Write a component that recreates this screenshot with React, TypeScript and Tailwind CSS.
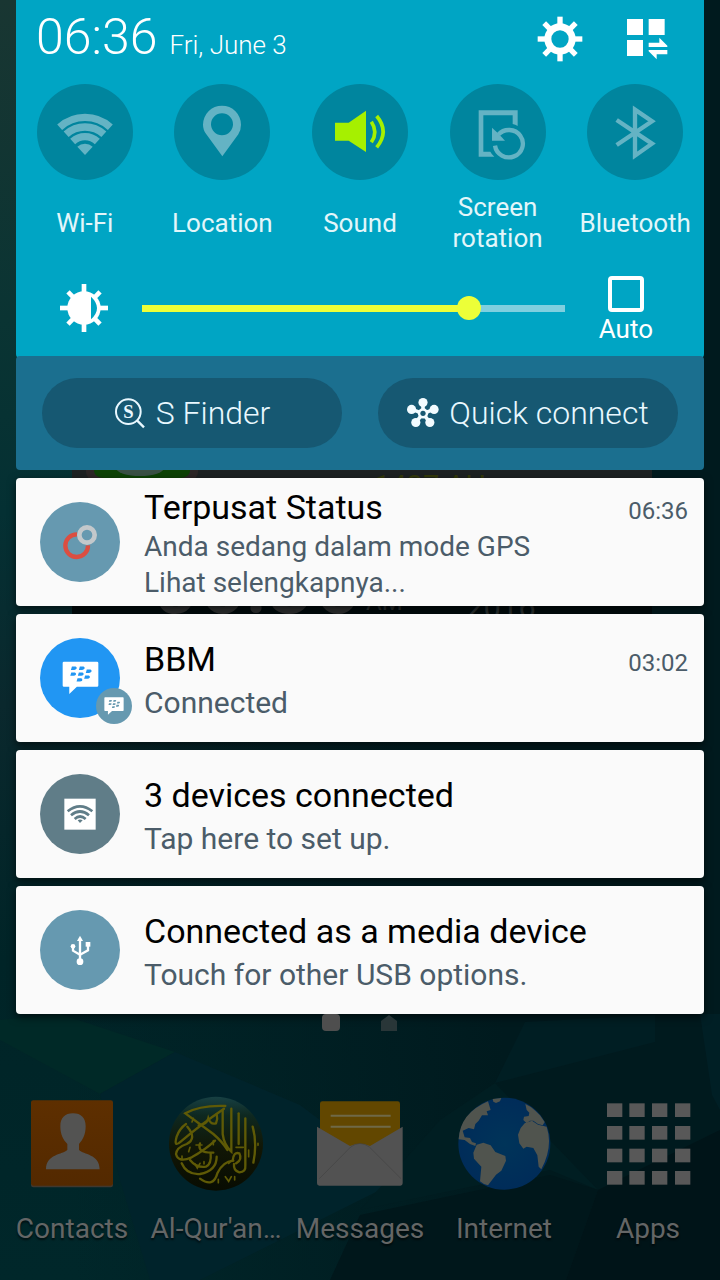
import { useState } from "react";
import type { CSSProperties, ReactNode } from "react";

const DIM = "#64b3c4";

function ToggleIcon({ box, children }: { box: string; children: ReactNode }) {
  return (
    <svg viewBox={box} className="size-24" fill="none" aria-hidden="true">
      {children}
    </svg>
  );
}

const toggles = [
  {
    label: "Wi-Fi",
    on: false,
    icon: (
      <ToggleIcon box="109 253 288 288">
        <g stroke={DIM} strokeWidth="22">
          <path d="M177 382.6A113 113 0 0 1 329 382.6" />
          <path d="M196.4 404A84 84 0 0 1 309.6 404" />
          <path d="M216 425.4A55 55 0 0 1 290 425.4" />
        </g>
        <path d="M253 466L230 441A34 34 0 0 1 276 441Z" fill={DIM} />
      </ToggleIcon>
    ),
  },
  {
    label: "Location",
    on: false,
    icon: (
      <ToggleIcon box="522 253 288 288">
        <path
          fill={DIM}
          fillRule="evenodd"
          d="M667 470L619 404Q609 391 609 375A57 57 0 0 1 723 375Q723 391 715 404ZM666 341A33 33 0 1 0 666 407A33 33 0 1 0 666 341Z"
        />
      </ToggleIcon>
    ),
  },
  {
    label: "Sound",
    on: true,
    icon: (
      <ToggleIcon box="933 253 288 288">
        <path d="M1002 369H1043L1095 333V457L1043 423H1002Z" fill="#a6f000" />
        <g stroke="#a6f000" strokeWidth="11">
          <path d="M1111 366Q1132 397 1111 428" />
          <path d="M1127 349Q1166 396 1127 443" />
        </g>
      </ToggleIcon>
    ),
  },
  {
    label: "Screen rotation",
    on: false,
    icon: (
      <ToggleIcon box="264 253 288 288">
        <path
          fill={DIM}
          d="M350 332H467V379Q460 375 452 373V347H364V456H385Q389 464 397 471H350Z"
        />
        <path d="M409 405A42 41 0 1 1 399 438" stroke={DIM} strokeWidth="13" />
        <path d="M390 384L404 397L418 411L429 423H390Z" fill={DIM} />
      </ToggleIcon>
    ),
  },
  {
    label: "Bluetooth",
    on: false,
    icon: (
      <ToggleIcon box="677 253 288 288">
        <path
          d="M766 361L872 432L821 468V330L872 365L766 436"
          stroke={DIM}
          strokeWidth="13"
        />
      </ToggleIcon>
    ),
  },
];

const EIGHTHS = [0, 45, 90, 135, 180, 225, 270, 315];

function GearIcon() {
  return (
    <svg viewBox="-72 -72 144 144" className="size-12" aria-hidden="true">
      <circle r="36.5" fill="none" stroke="#fff" strokeWidth="21" />
      {EIGHTHS.map((a) => (
        <rect key={a} x="-8" y="-67" width="16" height="24" fill="#fff" transform={`rotate(${a})`} />
      ))}
    </svg>
  );
}

function EditPanelIcon() {
  return (
    <svg viewBox="792 45 144 144" className="size-12" fill="#fff" aria-hidden="true">
      <path d="M801 57H849V105H801ZM866 57H914V105H866ZM801 120H849V168H801Z" />
      <path d="M922 141H866V128H898V113L922 137ZM866 150H922V163H890V178L866 154Z" />
    </svg>
  );
}

function BrightnessIcon() {
  return (
    <svg viewBox="-72 -72 144 144" className="size-12 shrink-0" aria-hidden="true">
      <circle r="50" fill="#fff" />
      {EIGHTHS.map((a) => (
        <rect
          key={a}
          x="-7"
          y={a % 90 ? -68 : -72}
          width="14"
          height="26"
          fill="#fff"
          transform={`rotate(${a})`}
        />
      ))}
      <path d="M21 -34Q57 0 21 34Z" fill="#00a5c4" />
    </svg>
  );
}

function FinderIcon() {
  return (
    <svg viewBox="340 410 96 96" className="size-8" fill="none" stroke="#e9f8ff" aria-hidden="true">
      <circle cx="383" cy="454" r="37" strokeWidth="6" />
      <path d="M409 480L430 501" strokeWidth="7" />
      <text
        x="383"
        y="473"
        textAnchor="middle"
        fontSize="56"
        fontWeight="700"
        fontFamily="'Liberation Serif', serif"
        fill="#e9f8ff"
        stroke="none"
      >
        S
      </text>
    </svg>
  );
}

function QuickConnectIcon() {
  const nodes = [
    [190, 428],
    [155, 449],
    [224, 449],
    [168, 489],
    [211, 489],
  ];
  return (
    <svg viewBox="141 411 98 98" className="size-8" aria-hidden="true">
      {nodes.map(([x, y]) => (
        <g key={`${x}-${y}`}>
          <path d={`M190 461L${x} ${y}`} stroke="#f2fbff" strokeWidth="11" />
          <circle cx={x} cy={y} r="14" fill="#f2fbff" />
        </g>
      ))}
      <circle cx="190" cy="461" r="16" fill="#f2fbff" />
      <circle cx="190" cy="461" r="8" fill="#165872" />
    </svg>
  );
}

function BubbleIcon({ dot, className }: { dot: string; className: string }) {
  const dots = [
    [221, 594],
    [245, 594],
    [266, 603],
    [219, 612],
    [242, 612],
    [261, 621],
    [238, 629],
  ];
  return (
    <svg viewBox="185 572 112 102" className={className} aria-hidden="true">
      <path
        d="M191 574H291Q295 574 295 578V646Q295 650 291 650H230L207 672V650H191Q187 650 187 646V578Q187 574 191 574Z"
        fill="#fff"
      />
      {dots.map(([x, y]) => (
        <path
          key={`${x}-${y}`}
          transform={`translate(${x} ${y})`}
          d="M-6 -5H5Q10 -4 8 1Q6 5 1 5H-9Z"
          fill={dot}
        />
      ))}
    </svg>
  );
}

type Notice = {
  title: string;
  lines: string[];
  time?: string;
  tint: string;
  icon: ReactNode;
};

const notices: Notice[] = [
  {
    title: "Terpusat Status",
    lines: ["Anda sedang dalam mode GPS", "Lihat selengkapnya..."],
    time: "06:36",
    tint: "bg-[#6699b0]",
    icon: (
      <svg viewBox="120 96 240 240" className="size-20" fill="none" aria-hidden="true">
        <path d="M231 193A34 34 0 1 0 264 226" stroke="#dc4e41" strokeWidth="13" />
        <circle cx="261" cy="195" r="23" stroke="#c3c8cb" strokeWidth="14" />
      </svg>
    ),
  },
  {
    title: "BBM",
    lines: ["Connected"],
    time: "03:02",
    tint: "bg-[#2196f3]",
    icon: (
      <>
        <BubbleIcon dot="#2196f3" className="w-[37px]" />
        <span className="absolute -right-3 -bottom-1.5 flex size-9 items-center justify-center rounded-full bg-[#6699b0]">
          <BubbleIcon dot="#6699b0" className="w-5" />
        </span>
      </>
    ),
  },
  {
    title: "3 devices connected",
    lines: ["Tap here to set up."],
    tint: "bg-[#607d88]",
    icon: (
      <svg viewBox="120 72 240 240" className="size-20" fill="none" aria-hidden="true">
        <path d="M193 146H287V239H193Z" fill="#fff" />
        <g stroke="#607d88" strokeWidth="8">
          <path d="M203 184Q240 154 277 184" />
          <path d="M213 196Q240 173 267 196" />
          <path d="M224 207Q240 192 257 207" />
        </g>
        <path d="M233 211Q240 206 248 211L240 219Z" fill="#607d88" />
      </svg>
    ),
  },
  {
    title: "Connected as a media device",
    lines: ["Touch for other USB options."],
    tint: "bg-[#6699b0]",
    icon: (
      <svg viewBox="120 480 240 240" className="size-20" fill="none" aria-hidden="true">
        <g stroke="#fff" strokeWidth="7">
          <path d="M240 568V635" />
          <path d="M219 589V602L240 614" />
          <path d="M264 586V601L240 614" />
        </g>
        <g fill="#fff">
          <path d="M231 573L240 557L249 573Z" />
          <circle cx="219" cy="589" r="7" />
          <path d="M257 576H271V590H257Z" />
          <circle cx="240" cy="635" r="10" />
        </g>
      </svg>
    ),
  },
];

const dock = [
  {
    label: "Contacts",
    icon: (
      <svg viewBox="72 258 288 288" className="size-24" aria-hidden="true">
        <defs>
          <linearGradient id="contact" x2="0" y2="1">
            <stop stopColor="#5e2f00" />
            <stop offset="1" stopColor="#532900" />
          </linearGradient>
        </defs>
        <rect x="93" y="274" width="246" height="258" rx="7" fill="#40382f" />
        <rect x="93" y="271" width="246" height="256" rx="7" fill="url(#contact)" />
        <path
          d="M219 310C244 310 257 324 257 349C257 375 248 390 237 402V420C250 434 299 432 299 478H138C138 432 188 434 202 420V402C190 390 181 375 181 349C181 324 194 310 219 310Z"
          fill="#535352"
        />
      </svg>
    ),
  },
  {
    label: "Al-Qur'an…",
    icon: (
      <svg viewBox="504 258 288 288" className="size-24" fill="none" aria-hidden="true">
        <defs>
          <linearGradient id="quran" x2="0" y2="1">
            <stop stopColor="#174043" />
            <stop offset="0.2" stopColor="#0e2820" />
            <stop offset="0.55" stopColor="#111605" />
            <stop offset="1" stopColor="#080c02" />
          </linearGradient>
        </defs>
        <circle cx="648" cy="401" r="141" fill="url(#quran)" />
        <g stroke="#5f5a06" strokeWidth="7" strokeLinecap="round">
          <path d="M676 288Q600 285 556 310Q590 335 640 372Q668 396 682 420" />
          <path d="M672 296Q600 345 543 394Q520 415 530 380Q538 356 558 342" />
          <path d="M562 350Q592 385 560 402Q530 412 528 432Q535 460 575 442Q615 420 645 392" />
          <path d="M668 300V372Q672 405 694 425V296" />
          <path d="M716 310V402" />
          <path d="M736 325V466Q738 487 718 487Q700 482 702 462" />
          <path d="M758 350Q772 400 760 458" />
          <path d="M545 460Q560 495 600 492Q650 482 650 440" />
          <path d="M570 450Q590 475 618 470Q635 462 632 430" />
          <path d="M600 506Q640 535 652 490Q668 455 700 452" />
          <path d="M698 452Q700 424 718 430Q728 450 708 460" />
          <path d="M596 346Q620 345 625 325Q632 345 648 340Q654 326 650 312" />
          <path d="M600 400Q590 430 640 428" />
        </g>
        <g stroke="#5f5a06" strokeWidth="5" strokeLinecap="round">
          <path d="M585 462L592 474L600 460M676 500L686 514L694 500M655 508V518M704 500V510M612 455V462M588 405H606M708 412H730M570 412L566 425M686 460L694 452M580 325L576 336M774 400V406M546 438V448M746 420V440M640 392V404" />
        </g>
      </svg>
    ),
  },
  {
    label: "Messages",
    icon: (
      <svg viewBox="936 258 288 288" className="size-24" fill="none" aria-hidden="true">
        <rect x="960" y="274" width="240" height="180" rx="7" fill="#624700" />
        <path d="M992 317H1172M992 350H1172" stroke="#6f6947" strokeWidth="6" />
        <path
          d="M951 350L1050 408Q1080 394 1110 408L1208 350V520Q1208 527 1201 527H958Q951 527 951 520Z"
          fill="#525252"
        />
        <path d="M958 506L1052 411Q1080 390 1108 411L1203 506" stroke="#434343" strokeWidth="2" />
      </svg>
    ),
  },
  {
    label: "Internet",
    icon: (
      <svg viewBox="288 288 288 288" className="size-24" aria-hidden="true">
        <defs>
          <radialGradient id="sea">
            <stop stopColor="#003459" />
            <stop offset="1" stopColor="#002c59" />
          </radialGradient>
        </defs>
        <circle cx="433" cy="431" r="138" fill="url(#sea)" />
        <g fill="#50544e">
          <path d="M384 304L392 330L380 334L384 346L366 346L356 362L346 372L342 388L326 384L308 392L314 412L330 414L336 426L348 430L346 438L330 432L314 420L296 418Q300 340 384 304Z" />
          <path d="M398 297L424 294L420 304L408 309L400 305Z" />
          <path d="M350 434L370 428L392 436L406 456L436 468L438 482L424 512L408 524L384 556Q368 552 360 544L364 500L342 476L340 458Z" />
          <path d="M496 312Q514 320 526 332L540 346L554 366L548 376L534 372L520 362L510 362L500 370L490 360L492 350L506 348L508 338L500 330Z" />
          <path d="M494 370L516 362L534 374L560 380Q580 440 544 508L536 500L532 466L520 444L500 440L490 446L478 430L474 404L482 384Z" />
        </g>
      </svg>
    ),
  },
  {
    label: "Apps",
    icon: (
      <svg viewBox="720 288 288 288" className="size-24" fill="#585858" aria-hidden="true">
        {[310, 378, 446, 513].map((y) =>
          [741, 808, 876, 945].map((x) => (
            <rect key={`${x}-${y}`} x={x} y={y} width="46" height="41" />
          )),
        )}
      </svg>
    ),
  },
];

function Wallpaper() {
  return (
    <svg
      viewBox="0 0 720 1280"
      preserveAspectRatio="none"
      className="absolute inset-0 size-full"
      aria-hidden="true"
    >
      <defs>
        <linearGradient id="left" x2="0" y2="1">
          <stop stopColor="#193632" />
          <stop offset="0.25" stopColor="#0a3433" />
          <stop offset="0.4" stopColor="#043033" />
          <stop offset="0.55" stopColor="#0a282d" />
          <stop offset="0.75" stopColor="#002427" />
          <stop offset="1" stopColor="#00272a" />
        </linearGradient>
        <linearGradient id="right">
          <stop offset="0.1" stopColor="#001b20" stopOpacity="0" />
          <stop offset="0.7" stopColor="#001a1e" />
        </linearGradient>
      </defs>
      <rect width="720" height="1280" fill="url(#left)" />
      <rect width="720" height="1280" fill="url(#right)" />
      <path d="M0 1020L60 1014L175 1052L100 1094L0 1040Z" fill="#002927" />
      <path d="M175 1052L300 1105L400 1180L200 1280H150L120 1180L100 1094Z" fill="#00232b" />
      <path d="M525 1022L655 1015V1042L495 1083Z" fill="#001e23" />
      <path d="M700 1014H720V1110L712 1095Z" fill="#001f25" />
      <path d="M495 1083L598 1190L550 1170L360 1210L440 1120Z" fill="#001e22" />
      <path d="M598 1190L720 1130V1280H566Z" fill="#001418" />
      <path d="M330 1280L360 1215L550 1175L598 1190L566 1280Z" fill="#00171b" />
    </svg>
  );
}

export default function App() {
  const [level, setLevel] = useState(79);
  const [auto, setAuto] = useState(false);
  const fill = { "--fill": `${level}%` } as CSSProperties;

  return (
    <div className="relative min-h-screen overflow-hidden bg-[#001c21] font-['Roboto',sans-serif]">
      <Wallpaper />

      {/* Home screen clock widget, mostly covered by the shade */}
      <div className="absolute top-[440px] right-[68px] left-[72px] h-[200px] bg-linear-to-b from-[#1d2122] from-20% to-[#020c0e] to-80%">
        <svg viewBox="0 0 120 40" className="absolute top-0 left-3 w-[120px]" aria-hidden="true">
          <rect x="2" width="112" height="40" rx="8" fill="#2c2626" />
          <path d="M10 20H106V30Q106 38 94 38H22Q10 38 10 30Z" fill="#0d4205" />
          <ellipse cx="56" cy="28" rx="24" ry="8" fill="#3a5045" />
        </svg>
        <p className="absolute top-[28px] left-[302px] text-[29px] leading-9 text-[#33390a]">1437 AH</p>
        <p className="absolute top-[95px] left-[80px] text-[82px] leading-[100px] font-medium text-[#303232]">06:36</p>
        <p className="absolute top-[146px] left-[294px] text-[24px] leading-8 text-[#2a3030]">AM</p>
        <p className="absolute top-[150px] left-[394px] text-[31px] leading-9 text-[#2c3232]">2016</p>
      </div>

      <div className="relative flex min-h-screen flex-col">
        <main className="flex flex-col gap-2 px-4">
          <div>
            <section className="rounded-b-[4px] bg-[#00a5c4] pb-3 text-white">
              <header className="flex h-[84px] items-start justify-between pr-8 pl-5">
                <div className="flex items-baseline gap-3">
                  <h1 className="text-[50px] leading-[74px] font-light">06:36</h1>
                  <p className="text-[26px] leading-8 font-light">Fri, June 3</p>
                </div>
                <div className="flex gap-10 pt-[15px]">
                  <button type="button" aria-label="Settings">
                    <GearIcon />
                  </button>
                  <button type="button" aria-label="Edit quick settings">
                    <EditPanelIcon />
                  </button>
                </div>
              </header>

              <div className="grid grid-cols-5">
                {toggles.map((t) => (
                  <button
                    key={t.label}
                    type="button"
                    aria-pressed={t.on}
                    className="flex flex-col items-center gap-3"
                  >
                    <span className="rounded-full bg-[#00859e]">{t.icon}</span>
                    <span className="flex h-[62px] items-center px-4 text-center text-[26px] leading-[31px] text-[#e3f6fa]">
                      {t.label}
                    </span>
                  </button>
                ))}
              </div>

              <div className="mt-[22px] flex items-start gap-[34px] pr-[51px] pl-11">
                <span className="pt-2">
                  <BrightnessIcon />
                </span>
                <span className="flex h-16 min-w-0 flex-1 items-center">
                  <input
                    type="range"
                    min={0}
                    max={100}
                    value={level}
                    onChange={(e) => setLevel(Number(e.target.value))}
                    aria-label="Brightness"
                    style={fill}
                    className="h-[7px] w-full appearance-none bg-[linear-gradient(to_right,#ecff38_var(--fill),#80cfdf_var(--fill))] [&::-webkit-slider-thumb]:size-6 [&::-webkit-slider-thumb]:appearance-none [&::-webkit-slider-thumb]:rounded-full [&::-webkit-slider-thumb]:bg-[#ecff38]"
                  />
                </span>
                <label className="flex flex-col items-center text-[26px] leading-[34px]">
                  <input
                    type="checkbox"
                    checked={auto}
                    onChange={(e) => setAuto(e.target.checked)}
                    className="size-9 appearance-none rounded-[4px] border-4 border-white checked:bg-white"
                  />
                  Auto
                </label>
              </div>
            </section>

            <section className="-mt-0.5 flex gap-9 rounded-[4px] bg-[#1b6f8f] px-[26px] py-[22px] text-[32px] font-light text-[#e9f8ff]">
              <button
                type="button"
                className="flex h-[70px] flex-1 items-center justify-center gap-2.5 rounded-full bg-[#165872]"
              >
                <FinderIcon />
                S Finder
              </button>
              <button
                type="button"
                className="flex h-[70px] flex-1 items-center justify-center gap-2.5 rounded-full bg-[#165872]"
              >
                <QuickConnectIcon />
                Quick connect
              </button>
            </section>
          </div>

          {notices.map((n) => (
            <article
              key={n.title}
              className="flex h-32 items-center gap-6 rounded-[4px] bg-[#fafafa] pr-4 pl-6 shadow-[0_3px_8px_rgba(0,0,0,0.6)]"
            >
              <div className={`relative flex size-20 shrink-0 items-center justify-center rounded-full ${n.tint}`}>
                {n.icon}
              </div>
              <div className={`flex min-w-0 flex-1 flex-col pt-1 ${n.lines.length > 1 ? "gap-0.5" : "gap-1.5"}`}>
                <div className="flex items-baseline justify-between">
                  <h2 className="text-[34px] leading-10 text-black">{n.title}</h2>
                  {n.time && <time className="text-[24px] leading-8 text-[#4b5c69]">{n.time}</time>}
                </div>
                <div
                  className={`leading-9 text-[#4b5c69] ${n.lines.length > 1 ? "text-[28px]" : "text-[30px]"}`}
                >
                  {n.lines.map((line) => (
                    <p key={line}>{line}</p>
                  ))}
                </div>
              </div>
            </article>
          ))}
        </main>

        <div className="flex justify-center gap-10">
          <svg viewBox="0 0 18 18" className="size-[18px]" aria-hidden="true">
            <rect width="18" height="17" rx="4" fill="#4e4e4e" />
          </svg>
          <svg viewBox="0 0 18 18" className="size-[18px]" aria-hidden="true">
            <path d="M9 1L17 7V17H1V7Z" fill="#293638" />
          </svg>
        </div>

        <nav className="mt-auto grid grid-cols-5 pt-16 pb-[33px]">
          {dock.map((d) => (
            <a
              key={d.label}
              href="#"
              className="flex flex-col items-center gap-[19px] text-[28px] leading-9 whitespace-nowrap text-[#646666] [text-shadow:0_2px_2px_rgba(0,0,0,0.6)]"
            >
              {d.icon}
              {d.label}
            </a>
          ))}
        </nav>
      </div>
    </div>
  );
}
